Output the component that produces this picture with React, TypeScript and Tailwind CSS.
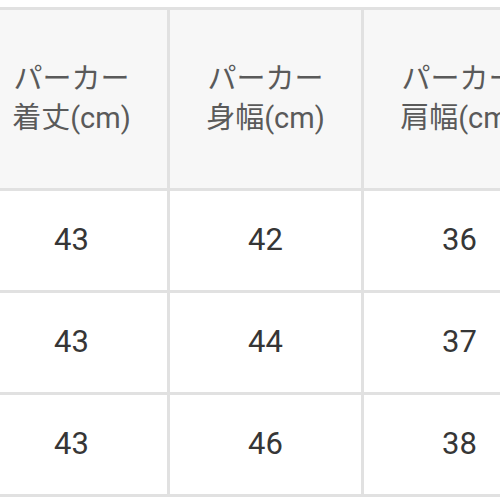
export default function App() {
  const headers = [
    ['パーカー', '着丈(cm)'],
    ['パーカー', '身幅(cm)'],
    ['パーカー', '肩幅(cm)'],
  ];
  const rows = [
    ['43', '42', '36'],
    ['43', '44', '37'],
    ['43', '46', '38'],
  ];

  return (
    <div
      className="w-[500px] h-[500px] overflow-hidden bg-white"
      style={{ fontFamily: 'Roboto, "Noto Sans CJK JP", sans-serif' }}
    >
      <div className="mt-[7px] ml-[-24px] w-[579px] grid grid-cols-[191px_191px_191px] gap-[3px] py-[3px] pr-[3px] bg-[#e1e1e1]">
        {headers.map((h, i) => (
          <div
            key={'h' + i}
            className="h-[178px] bg-[#f7f7f7] flex flex-col items-center justify-center text-[29px] leading-[39px] text-[#5a5a5a]"
          >
            <span>{h[0]}</span>
            <span>{h[1]}</span>
          </div>
        ))}
        {rows.map((r, ri) =>
          r.map((v, ci) => (
            <div
              key={ri + '-' + ci}
              className="h-[99px] bg-white flex items-center justify-center text-[31px] text-[#363636]"
            >
              {v}
            </div>
          ))
        )}
      </div>
    </div>
  );
}
